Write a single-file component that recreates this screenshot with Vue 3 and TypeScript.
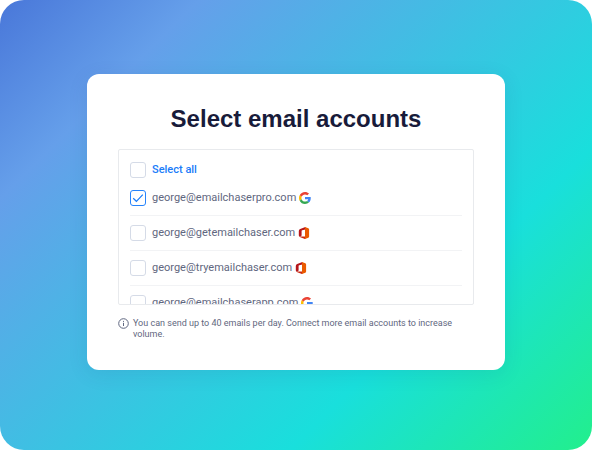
<script setup lang="ts">
import { computed, ref } from 'vue'

type Provider = 'google' | 'office'

interface Account {
  email: string
  provider: Provider
  selected: boolean
}

const accounts = ref<Account[]>([
  { email: 'george@emailchaserpro.com', provider: 'google', selected: true },
  { email: 'george@getemailchaser.com', provider: 'office', selected: false },
  { email: 'george@tryemailchaser.com', provider: 'office', selected: false },
  { email: 'george@emailchaserapp.com', provider: 'google', selected: false },
])

const allSelected = computed<boolean>({
  get: () => accounts.value.every((a) => a.selected),
  set: (value) => accounts.value.forEach((a) => (a.selected = value)),
})
</script>

<template>
  <main class="page">
    <section class="card">
      <h1 class="title">Select email accounts</h1>

      <div class="list">
        <label class="row row-all">
          <span class="box">
            <input v-model="allSelected" type="checkbox" />
            <svg v-if="allSelected" viewBox="0 0 16 16" aria-hidden="true"><path d="M3.2 8.2 6.4 11.3 12.8 4.6" /></svg>
          </span>
          <span>Select all</span>
        </label>

        <ul class="accounts">
          <li v-for="account in accounts" :key="account.email" class="account">
            <label class="row">
              <span class="box">
                <input v-model="account.selected" type="checkbox" />
                <svg v-if="account.selected" viewBox="0 0 16 16" aria-hidden="true"><path d="M3.2 8.2 6.4 11.3 12.8 4.6" /></svg>
              </span>
              <span class="email">{{ account.email }}</span>
              <svg v-if="account.provider === 'google'" class="logo" viewBox="0 0 48 48" aria-hidden="true">
                <path fill="#ea4335" d="M24 9.5c3.54 0 6.71 1.22 9.21 3.6l6.85-6.85C35.9 2.38 30.47 0 24 0 14.62 0 6.51 5.38 2.56 13.22l7.98 6.19C12.43 13.72 17.74 9.5 24 9.5z" />
                <path fill="#4285f4" d="M46.98 24.55c0-1.57-.15-3.09-.38-4.55H24v9.02h12.94c-.58 2.96-2.26 5.48-4.78 7.18l7.73 6c4.51-4.18 7.09-10.36 7.09-17.65z" />
                <path fill="#fbbc05" d="M10.53 28.59c-.48-1.45-.76-2.99-.76-4.59s.27-3.14.76-4.59l-7.98-6.19C.92 16.46 0 20.12 0 24c0 3.88.92 7.54 2.56 10.78l7.97-6.19z" />
                <path fill="#34a853" d="M24 48c6.48 0 11.93-2.13 15.89-5.81l-7.73-6c-2.15 1.45-4.92 2.3-8.16 2.3-6.26 0-11.57-4.22-13.47-9.91l-7.98 6.19C6.51 42.62 14.62 48 24 48z" />
              </svg>
              <svg v-else class="logo" viewBox="0 0 12 12" aria-hidden="true">
                <path fill="#b5161b" d="M7.4 0 2.2 2Q.8 2.6.8 4v4.2q0 1.3 1 1.5l1.6-.9q.2-.1.2-.6V4.1q0-.6.6-.8l3.2-.9z" />
                <path fill="#c92a12" d="M1.8 9.3q-.2.6.5.9l4 1.6q.6.3 1.1.1V9.5H3.2z" />
                <path fill="#ea5a00" d="M7 0 10.3 1.2q.8.3.8 1.2v7.2q0 .9-.8 1.2L7 12z" />
              </svg>
            </label>
          </li>
        </ul>
      </div>

      <p class="note">
        <svg class="info" viewBox="0 0 11 11" aria-hidden="true">
          <circle cx="5.5" cy="5.5" r="4.8" />
          <path d="M5.5 4.8v3.2M5.5 2.9v1" />
        </svg>
        <span>You can send up to 40 emails per day. Connect more email accounts to increase volume.</span>
      </p>
    </section>
  </main>
</template>

<style>
body {
  margin: 0;
  background: #fff;
}
</style>

<style scoped>
.page {
  box-sizing: border-box;
  min-height: 100vh;
  display: flex;
  align-items: center;
  justify-content: center;
  padding: 24px 24px 30px;
  border-radius: 24px;
  background: linear-gradient(135deg, #4977d9 0%, #659fea 19%, #19dfdc 71%, #22ef8c 100%);
  font-family: Roboto, "Liberation Sans", sans-serif;
  color: #5f6780;
}

.card {
  box-sizing: border-box;
  width: 100%;
  max-width: 418px;
  padding: 31px 31px 30px;
  border-radius: 12px;
  background: #fff;
  box-shadow: 0 4px 20px rgba(20, 60, 120, 0.1);
}

.title {
  margin: 0 0 17px;
  font: 700 24px/27px "Liberation Sans", Arial, sans-serif;
  text-align: center;
  color: #181b3a;
}

.list {
  box-sizing: border-box;
  height: 156px;
  padding: 12px 11px 0;
  border: 1px solid #e8eaed;
  border-radius: 2px;
  overflow-y: auto;
  scrollbar-width: none;
}

.row {
  display: flex;
  align-items: center;
  height: 16px;
  gap: 6px;
  font-size: 11px;
  line-height: 16px;
  cursor: pointer;
}

.row-all {
  color: #1a7cf9;
  font-weight: 500;
}

.box {
  display: grid;
  width: 16px;
  height: 16px;
}

.box > * {
  grid-area: 1 / 1;
}

.box input {
  appearance: none;
  box-sizing: border-box;
  width: 16px;
  height: 16px;
  margin: 0;
  border: 1px solid #d5dbe7;
  border-radius: 3px;
  background: #fff;
  cursor: pointer;
}

.box input:checked {
  border-color: #2684fc;
}

.box svg {
  width: 16px;
  height: 16px;
  fill: none;
  stroke: #1a7cf9;
  stroke-width: 1.2;
  pointer-events: none;
}

.accounts {
  margin: 0;
  padding: 3px 0 0;
  list-style: none;
}

.account {
  padding: 9px 0;
  border-bottom: 1px solid #f2f3f5;
}

.logo {
  width: 12px;
  height: 12px;
  margin-left: -3px;
}

.note {
  display: flex;
  gap: 4px;
  margin: 13px 0 0;
  font-size: 9px;
  line-height: 11px;
}

.info {
  flex: none;
  width: 11px;
  height: 11px;
  fill: none;
  stroke: #5f6780;
  stroke-width: 1;
}
</style>
